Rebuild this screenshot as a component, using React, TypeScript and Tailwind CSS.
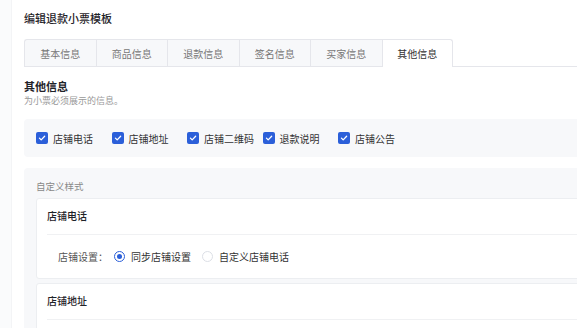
import React from "react";

const tabs = ["基本信息", "商品信息", "退款信息", "签名信息", "买家信息", "其他信息"];
const checks = ["店铺电话", "店铺地址", "店铺二维码", "退款说明", "店铺公告"];

function Check({ label }: { label: string }) {
  return (
    <div className="flex items-center w-[75.5px] shrink-0">
      <span className="w-[12px] h-[12px] rounded-[2px] bg-[#2b5fd9] flex items-center justify-center">
        <svg width="8" height="8" viewBox="0 0 10 10" fill="none">
          <path d="M1.8 5.2 L4 7.3 L8.3 2.8" stroke="#fff" strokeWidth="1.6" strokeLinecap="round" strokeLinejoin="round" />
        </svg>
      </span>
      <span className="ml-[5px] text-[10px] text-[#333] whitespace-nowrap">{label}</span>
    </div>
  );
}

function Radio({ on, label }: { on?: boolean; label: string }) {
  return (
    <div className="flex items-center">
      {on ? (
        <span className="w-[11px] h-[11px] rounded-full border border-[#2b5fd9] flex items-center justify-center">
          <span className="w-[5px] h-[5px] rounded-full bg-[#2b5fd9]" />
        </span>
      ) : (
        <span className="w-[11px] h-[11px] rounded-full border border-[#dcdfe6]" />
      )}
      <span className="ml-[6px] text-[10px] text-[#333] whitespace-nowrap">{label}</span>
    </div>
  );
}

export default function App() {
  return (
    <div
      className="w-[577px] h-[328px] overflow-hidden flex bg-white"
      style={{ fontFamily: '"Noto Sans CJK SC", "Noto Sans", sans-serif' }}
    >
      <div className="w-[12px] shrink-0 bg-[#fafbfc] border-r border-[#f3f4f6]" />
      <div className="flex-1 min-w-0 pl-[12px] pt-[10px]">
        <div className="text-[11px] font-medium text-[#1f2329] leading-[16px]">编辑退款小票模板</div>
        <div className="mt-[13px] flex h-[28px]">
          {tabs.map((t, i) => {
            const active = i === tabs.length - 1;
            return (
              <div
                key={t}
                className={
                  "w-[71.5px] shrink-0 flex items-center justify-center text-[10px] border-t border-l " +
                  (active
                    ? "bg-white text-[#333] border-r border-[#e5e6eb] rounded-tr-[3px]"
                    : "bg-[#f7f8fa] text-[#777] border-b border-[#e5e6eb]") +
                  (i === 0 ? " rounded-tl-[3px]" : "")
                }
              >
                {t}
              </div>
            );
          })}
          <div className="flex-1 border-b border-[#e5e6eb]" />
        </div>
        <div className="mt-[11px] text-[11px] font-bold text-[#1f2329] leading-[16px]">其他信息</div>
        <div className="text-[9px] text-[#999] leading-[13px]">为小票必须展示的信息。</div>
        <div className="mt-[12px] mr-[-20px] h-[38px] bg-[#f7f8fa] rounded-[4px] flex items-center pl-[12px]">
          {checks.map((c) => (
            <Check key={c} label={c} />
          ))}
        </div>
        <div className="mt-[11px] mr-[-20px] bg-[#f7f8fa] rounded-[4px] pl-[12px] pt-[11px] pb-[10px]">
          <div className="text-[9.5px] text-[#888] leading-[14px]">自定义样式</div>
          <div className="mt-[5px] bg-white border border-[#eceef1] rounded-[3px] pl-[10px]">
            <div className="h-[36px] flex items-center pb-[2px] text-[10px] font-medium text-[#1f2329] border-b border-[#f0f1f3]">
              店铺电话
            </div>
            <div className="h-[43px] flex items-center pl-[11px]">
              <span className="text-[10px] text-[#555]">店铺设置：</span>
              <div className="ml-[6px] flex items-center gap-[11px]">
                <Radio on label="同步店铺设置" />
                <Radio label="自定义店铺电话" />
              </div>
            </div>
          </div>
          <div className="mt-[4px] bg-white border border-[#eceef1] rounded-[3px] pl-[10px]">
            <div className="h-[36px] flex items-center pb-[2px] text-[10px] font-medium text-[#1f2329] border-b border-[#f0f1f3]">
              店铺地址
            </div>
            <div className="h-[43px]" />
          </div>
        </div>
      </div>
    </div>
  );
}
